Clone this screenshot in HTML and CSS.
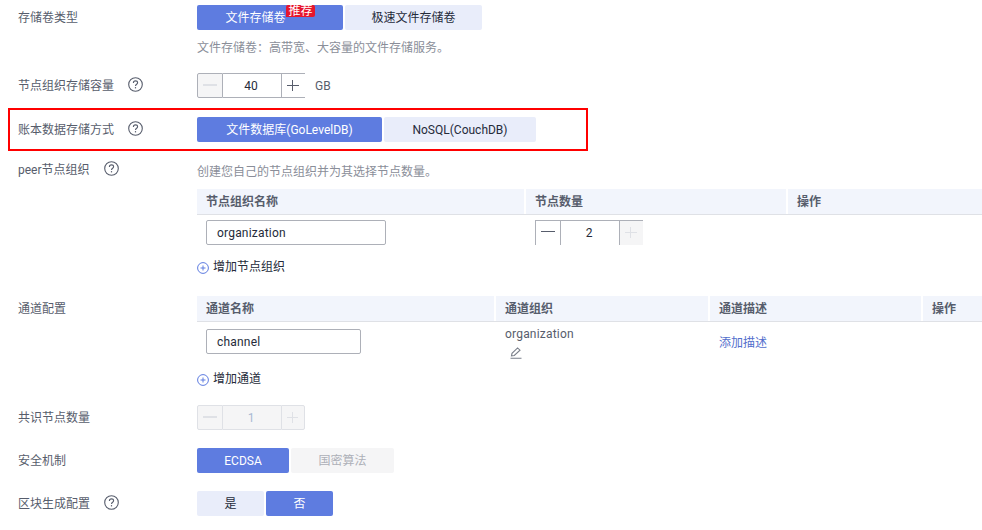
FILE: index.html
```html
<!DOCTYPE html>
<html lang="zh">
<head>
<meta charset="utf-8">
<title>存储配置</title>
<link rel="stylesheet" href="styles.css">
</head>
<body>
<svg class="defs" width="0" height="0">
  <symbol id="help" viewBox="0 0 15 15"><circle cx="7.5" cy="7.5" r="6.8" fill="none" stroke="currentColor" stroke-width="1.1"/><path d="M5.4 5.9C5.4 4.7 6.3 3.9 7.5 3.9S9.6 4.7 9.6 5.8C9.6 7.2 7.5 7.3 7.5 9" fill="none" stroke="currentColor" stroke-width="1.1"/><rect x="6.9" y="10.1" width="1.2" height="1.3" fill="currentColor"/></symbol>
  <symbol id="add" viewBox="0 0 12 12"><circle cx="6" cy="6" r="5.4" fill="none" stroke="currentColor"/><path d="M3.5 6h5M6 3.5v5" stroke="currentColor" fill="none"/></symbol>
</svg>
<main class="form">
  <section class="row row-type">
    <div class="label">存储卷类型</div>
    <div class="field">
      <div class="toggle">
        <button class="opt on w146 has-badge">文件存储卷<span class="badge">推荐</span></button>
        <button class="opt w137">极速文件存储卷</button>
      </div>
      <p class="hint hint-type">文件存储卷：高带宽、大容量的文件存储服务。</p>
    </div>
  </section>

  <section class="row row-capacity">
    <div class="label">节点组织存储容量<svg class="help"><use href="#help"/></svg></div>
    <div class="field inline">
      <div class="stepper open-end">
        <span class="step minus off"></span><span class="val">40</span><span class="step plus"></span>
      </div>
      <span class="unit">GB</span>
    </div>
  </section>

  <section class="row highlight">
    <div class="label">账本数据存储方式<svg class="help"><use href="#help"/></svg></div>
    <div class="field">
      <div class="toggle">
        <button class="opt on w185">文件数据库(GoLevelDB)</button>
        <button class="opt w152">NoSQL(CouchDB)</button>
      </div>
    </div>
  </section>

  <section class="row row-peer">
    <div class="label label-peer">peer节点组织<svg class="help help-peer"><use href="#help"/></svg></div>
    <div class="field">
      <p class="hint hint-peer">创建您自己的节点组织并为其选择节点数量。</p>
      <div class="thead cols-peer">
        <div class="th">节点组织名称</div><div class="th">节点数量</div><div class="th">操作</div>
      </div>
      <div class="tbody cols-peer">
        <div class="td"><input class="text w180i" value="organization"></div>
        <div class="td">
          <div class="stepper clipped">
            <span class="step minus"></span><span class="val">2</span><span class="step plus off"></span>
          </div>
        </div>
        <div class="td"></div>
      </div>
      <div class="add add-peer"><svg class="add-icon"><use href="#add"/></svg>增加节点组织</div>
    </div>
  </section>

  <section class="row row-channel">
    <div class="label label-channel">通道配置</div>
    <div class="field">
      <div class="thead cols-channel">
        <div class="th">通道名称</div><div class="th">通道组织</div><div class="th">通道描述</div><div class="th">操作</div>
      </div>
      <div class="tbody cols-channel">
        <div class="td"><input class="text w155i" value="channel"></div>
        <div class="td td-org">
          <div class="org">organization</div>
          <svg class="edit" viewBox="0 0 12 12"><path d="M1.5 8.8L2 6.3 7.6.9 10 3.2 4.3 8.5 1.5 8.8ZM0.5 11.3h11" fill="none" stroke="currentColor" stroke-width="1.1"/></svg>
        </div>
        <div class="td td-desc"><a class="link">添加描述</a></div>
        <div class="td"></div>
      </div>
      <div class="add add-channel"><svg class="add-icon"><use href="#add"/></svg>增加通道</div>
    </div>
  </section>

  <section class="row row-consensus">
    <div class="label">共识节点数量</div>
    <div class="field">
      <div class="stepper disabled">
        <span class="step minus off"></span><span class="val">1</span><span class="step plus off"></span>
      </div>
    </div>
  </section>

  <section class="row row-security">
    <div class="label">安全机制</div>
    <div class="field">
      <div class="toggle">
        <button class="opt on w92">ECDSA</button>
        <button class="opt dim w103">国密算法</button>
      </div>
    </div>
  </section>

  <section class="row row-block">
    <div class="label">区块生成配置<svg class="help help-block"><use href="#help"/></svg></div>
    <div class="field">
      <div class="toggle">
        <button class="opt w67">是</button>
        <button class="opt on w67">否</button>
      </div>
    </div>
  </section>
</main>
</body>
</html>
```
FILE: styles.css
```css
* { box-sizing: border-box; }
html, body { margin: 0; padding: 0; }
body {
  width: 982px;
  height: 530px;
  overflow: hidden;
  background: #fff;
  color: #575d6c;
  font-family: Roboto, "Noto Sans CJK SC", sans-serif;
  font-size: 12px;
  line-height: 18px;
}
.defs { position: absolute; }
.form { display: flex; flex-direction: column; }
.row { display: grid; grid-template-columns: 179px 803px; padding-left: 18px; }
.row-type { margin-top: 5px; }
.row-capacity { margin-top: 16px; }
.highlight {
  margin: 10px 394px 0 8px;
  padding: 6px 0 6px 8px;
  height: 43px;
  border: 2px solid #f00;
  grid-template-columns: 179px 1fr;
  align-items: center;
}
.row-peer { margin-top: 12px; }
.row-channel { margin-top: 20px; }
.row-consensus { margin-top: 17px; }
.row-security { margin-top: 18px; }
.row-block { margin-top: 18px; }

.label { display: flex; align-items: center; height: 25px; color: #575d6c; }
.label-peer { height: 14px; }
.help { width: 15px; height: 15px; margin: -3px 0 0 14px; color: #575d6c; flex: none; }

.field { min-width: 0; }
.inline { display: flex; align-items: center; }
.toggle { display: flex; gap: 2px; }
.opt {
  height: 25px;
  padding: 0;
  border: 0;
  border-radius: 2px;
  background: #e9edfa;
  color: #252b3a;
  font: inherit;
  position: relative;
}
.opt.on { background: #5e7ce0; color: #fff; }
.opt.dim { background: #f5f5f6; color: #adb0b8; }
.has-badge { padding-right: 29px; }
.w146 { width: 146px; }
.w137 { width: 137px; }
.w185 { width: 185px; }
.w152 { width: 152px; }
.w92 { width: 92px; }
.w103 { width: 103px; }
.w67 { width: 67px; }
.badge {
  position: absolute;
  left: 89px;
  top: 0;
  width: 29px;
  height: 12px;
  line-height: 12px;
  background: #e6162d;
  color: #fff;
  font-size: 12px;
  border-radius: 2px 2px 2px 0;
}
.hint { margin: 0; color: #8a8e99; }
.hint-type { margin-top: 9px; }
.hint-peer { margin-top: 0; }

.stepper { display: flex; width: 108px; height: 25px; }
.step, .val {
  position: relative;
  display: flex;
  align-items: center;
  justify-content: center;
  height: 25px;
  border: 1px solid #adb0b8;
}
.step { width: 26px; border-radius: 2px 0 0 2px; }
.val { width: 58px; padding-right: 2px; border-left: 0; border-right: 0; color: #252b3a; }
.plus { width: 24px; border-radius: 0 2px 2px 0; }
.step.off { background: #f5f5f6; }
.minus::before, .plus::before, .plus::after {
  content: "";
  position: absolute;
  background: #575d6c;
}
.minus::before { left: 5px; right: 5px; top: 10px; height: 1px; }
.plus::before { left: 5px; right: 6px; top: 11px; height: 1px; }
.plus::after { left: 10px; top: 6px; width: 1px; height: 11px; }
.minus.off::before { height: 2px; background: #dfe1e6; }
.plus.off::before, .plus.off::after { background: #dfe1e6; }
.open-end .plus { border-right: 0; border-radius: 0; }
.clipped .step, .clipped .val { border-bottom: 0; }
.clipped .step { border-radius: 0; }
.clipped .plus { border-right: 0; }
.unit { margin-left: 10px; color: #575d6c; }
.disabled .step, .disabled .val { border-color: #dfe1e6; background: #f5f5f6; }
.disabled .val { color: #a9b9d4; }
.disabled .plus { width: 24px; }

.thead, .tbody { display: grid; column-gap: 2px; }
.thead { margin-top: 8px; height: 26px; border-bottom: 1px solid #dfe1e6; }
.row-channel .thead { margin-top: 0; }
.th {
  display: flex;
  align-items: center;
  height: 25px;
  padding-left: 9px;
  background: #f2f5fc;
  color: #575d6c;
  font-weight: 700;
}
.cols-peer { grid-template-columns: 327px 260px 194px; }
.cols-channel { grid-template-columns: 297px 212px 211px 59px; }
.td { padding: 5px 0 0 9px; }
.text {
  display: block;
  height: 25px;
  padding: 0 10px;
  border: 1px solid #adb0b8;
  border-radius: 2px;
  color: #252b3a;
  font: inherit;
  letter-spacing: .2px;
  outline: 0;
}
.w180i { width: 180px; }
.w155i { width: 155px; margin-top: 2px; }
.td-org { padding-top: 3px; }
.org { color: #575d6c; letter-spacing: .2px; }
.edit { display: block; width: 12px; height: 12px; margin: 4px 0 0 5px; color: #7a7f8a; }
.td-desc { padding-top: 12px; }
.link { color: #526ecc; }
.add { display: flex; align-items: center; color: #252b3a; }
.add-peer { margin-top: 13px; }
.add-channel { margin-top: 11px; }
.add-icon { width: 12px; height: 12px; margin-right: 4px; color: #5e7ce0; margin-top: 2px; }
```
